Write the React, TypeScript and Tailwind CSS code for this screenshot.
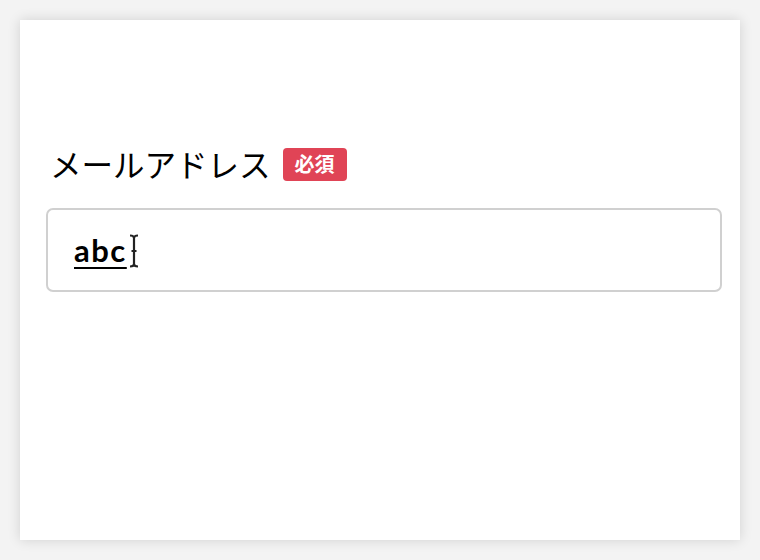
import React from "react";

export default function App() {
  return (
    <div className="w-[760px] h-[560px] bg-[#f3f3f3] p-[20px]" style={{ fontFamily: '"Lato", "Noto Sans CJK JP", sans-serif' }}>
      <div className="w-[720px] h-[520px] bg-white shadow-[0_0_12px_rgba(0,0,0,0.14)] pt-[122px] pl-[26px]">
        <div className="flex items-center h-[44px]">
          <span className="text-[31.5px] leading-none text-black pl-[4px]" style={{ fontFamily: '"Noto Sans CJK JP", sans-serif' }}>
            メールアドレス
          </span>
          <span className="ml-[12px] inline-flex items-center justify-center w-[64px] h-[33px] rounded-[4px] bg-[#e04456] text-white text-[20px] font-bold leading-none" style={{ fontFamily: '"Noto Sans CJK JP", sans-serif' }}>
            必須
          </span>
        </div>
        <div className="mt-[22px] w-[676px] h-[84px] border-2 border-[#d0d0d0] rounded-[7px] flex items-center pl-[26px]">
          <span className="text-[31px] font-bold text-black underline decoration-[2px] underline-offset-[5px] leading-none tracking-[1.5px]" style={{ fontFamily: '"Lato", sans-serif' }}>
            abc
          </span>
          <svg width="10" height="34" viewBox="0 0 10 34" className="ml-[2px] mt-[2px]">
            <path d="M1 1.5 Q5 1.5 5 4 L5 30 Q5 32.5 1 32.5 M9 1.5 Q5 1.5 5 4 M5 30 Q5 32.5 9 32.5 M2.5 17 L7.5 17" stroke="#222" strokeWidth="2.2" fill="none" />
          </svg>
        </div>
      </div>
    </div>
  );
}
